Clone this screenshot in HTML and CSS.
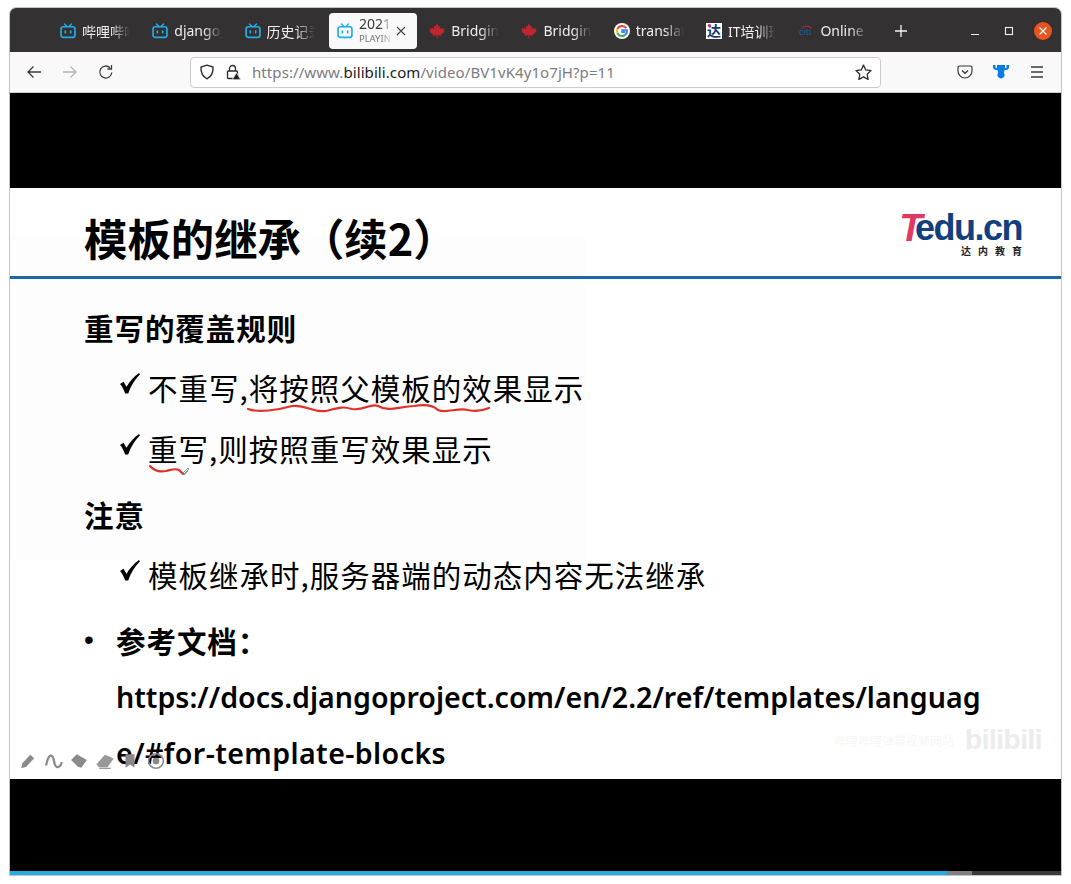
FILE: index.html
```html
<!DOCTYPE html>
<html lang="en">
<head>
    <meta charset="UTF-8">
    <meta name="viewport" content="width=device-width, initial-scale=1.0">
    <link rel="stylesheet" href="styles.css">
    <title>2021 django</title>
</head>
<body>
    <svg class="sprites" width="0" height="0">
        <symbol id="tv" viewBox="0 0 18 18">
            <path d="M5 1l3 3M13 1l-3 3" fill="none" stroke="#23ade5" stroke-width="1.6" stroke-linecap="round"/>
            <rect x="1.2" y="4.2" width="15.6" height="12" rx="2.5" fill="none" stroke="#23ade5" stroke-width="1.9"/>
            <path d="M6 9v2M12 9v2" stroke="#23ade5" stroke-width="1.9" stroke-linecap="round"/>
        </symbol>
        <symbol id="leaf" viewBox="0 0 16 16">
            <path d="M8 .5l1.7 3 1.5-.7-.5 3.600 2-2 .5 1.300 2.300-.4-.8 2.600 1 .6L12 11.500l.3 1.300-3.800-.5V15.500h-1v-3.200l-3.800.5.300-1.300L.300 8.500l1-.6-.8-2.600 2.300.4.500-1.300 2 2-.5-3.600 1.500.7z" fill="#c0262d"/>
        </symbol>
        <symbol id="tick" viewBox="0 0 20 21">
            <path d="M0 11l3.500-2.300 3 5.100C9.500 8.500 13.500 4 19 0l1 1.200C15 6 11 12.500 8.200 20.500H5.200C4 17 2.300 13.500 0 11z" fill="#000"/>
        </symbol>
    </svg>

    <div class="window">
        <div class="tabbar">
            <div class="tab"><svg class="favicon"><use href="#tv"/></svg><span class="tab-title">哔哩哔哩</span></div>
            <div class="tab"><svg class="favicon"><use href="#tv"/></svg><span class="tab-title">django_</span></div>
            <div class="tab"><svg class="favicon"><use href="#tv"/></svg><span class="tab-title">历史记录</span></div>
            <div class="tab tab-active">
                <svg class="favicon"><use href="#tv"/></svg>
                <div class="tab-stack">
                    <span class="tab-title">2021最新</span>
                    <span class="tab-sub">PLAYING</span>
                </div>
                <svg class="tab-close" width="10" height="10" viewBox="0 0 10 10"><path d="M1 1l8 8M9 1l-8 8" stroke="#444" stroke-width="1.1"/></svg>
            </div>
            <div class="tab"><svg class="favicon"><use href="#leaf"/></svg><span class="tab-title">Bridging</span></div>
            <div class="tab"><svg class="favicon"><use href="#leaf"/></svg><span class="tab-title">Bridging</span></div>
            <div class="tab">
                <svg class="favicon" viewBox="0 0 16 16">
                    <circle cx="8" cy="8" r="8" fill="#fff"/>
                    <path d="M12.300 5.300A5 5 0 0 0 3.500 5.800" fill="none" stroke="#e94235" stroke-width="2"/>
                    <path d="M3.500 5.800a5 5 0 0 0 0 4.400" fill="none" stroke="#fabb05" stroke-width="2"/>
                    <path d="M3.500 10.200a5 5 0 0 0 7.600 1.700" fill="none" stroke="#34a853" stroke-width="2"/>
                    <path d="M11.100 11.900A5 5 0 0 0 13 7.200H8.200v1.700H11" fill="none" stroke="#4285f4" stroke-width="2"/>
                </svg>
                <span class="tab-title">translate</span>
            </div>
            <div class="tab"><span class="favicon fav-it">达</span><span class="tab-title">IT培训班</span></div>
            <div class="tab">
                <svg class="favicon" viewBox="0 0 16 16">
                    <path d="M3.500 5.500C6 2.500 10 2.500 14 5" fill="none" stroke="#d8262c" stroke-width="1"/>
                    <text class="citi-text" x="1" y="12">citi</text>
                </svg>
                <span class="tab-title">Online B</span>
            </div>
            <svg class="newtab" width="14" height="14" viewBox="0 0 14 14"><path d="M7 1v12M1 7h12" stroke="#f4f4f4" stroke-width="1.300"/></svg>
            <div class="winbtns">
                <svg width="10" height="10" viewBox="0 0 10 10"><path d="M1 8.500h8" stroke="#eee" stroke-width="1.200"/></svg>
                <svg width="10" height="10" viewBox="0 0 10 10"><rect x="1.500" y="1.500" width="7" height="7" fill="none" stroke="#eee" stroke-width="1.100"/></svg>
                <span class="closebtn"><svg width="10" height="10" viewBox="0 0 10 10"><path d="M1.500 1.500l7 7M8.500 1.500l-7 7" stroke="#fff" stroke-width="1.200"/></svg></span>
            </div>
        </div>

        <div class="navbar">
            <svg class="navicon" viewBox="0 0 16 16"><path d="M15 8H2M7.500 2.500L2 8l5.500 5.500" fill="none" stroke="#3b3b3b" stroke-width="1.300"/></svg>
            <svg class="navicon" viewBox="0 0 16 16"><path d="M1 8h13M8.500 2.500L14 8l-5.500 5.500" fill="none" stroke="#b4b4b6" stroke-width="1.300"/></svg>
            <svg class="navicon" viewBox="0 0 16 16"><path d="M13.800 8.500A6 6 0 1 1 12 3.700M13.500 1v4h-4" fill="none" stroke="#3b3b3b" stroke-width="1.300"/></svg>
            <div class="urlbar">
                <svg class="urlicon" viewBox="0 0 16 16"><path d="M8 1.200L14 3c.300 5.500-1.500 9.500-6 11.800C3.500 12.500 1.700 8.500 2 3z" fill="none" stroke="#2b2b2b" stroke-width="1.400"/></svg>
                <svg class="urlicon" viewBox="0 0 16 16">
                    <path d="M4.500 7V4.500a3 3 0 0 1 6 0V7" fill="none" stroke="#2b2b2b" stroke-width="1.300"/>
                    <rect x="2.500" y="7" width="10" height="7.500" rx="1" fill="none" stroke="#2b2b2b" stroke-width="1.300"/>
                    <path d="M11.500 8.500l4.300 7.300H7.200z" fill="#222" stroke="#f9f9fa" stroke-width=".8"/>
                </svg>
                <span class="url"><span class="url-dim">https://www.</span>bilibili.com<span class="url-dim">/video/BV1vK4y1o7jH?p=11</span></span>
                <svg class="urlstar" viewBox="0 0 16 16"><path d="M8 1l2.100 4.600 5 .6-3.700 3.400 1 4.900L8 12.100l-4.400 2.400 1-4.900L.9 6.200l5-.6z" fill="none" stroke="#2b2b2b" stroke-width="1.200" stroke-linejoin="round"/></svg>
            </div>
            <div class="navright">
                <svg class="navicon" viewBox="0 0 16 16"><path d="M2.500 2h11A1.500 1.500 0 0 1 15 3.500V7a7 7 0 0 1-14 0V3.500A1.500 1.500 0 0 1 2.500 2z" fill="none" stroke="#3b3b3b" stroke-width="1.200"/><path d="M5 6.500L8 9.300l3-2.800" fill="none" stroke="#3b3b3b" stroke-width="1.300"/></svg>
                <svg class="navicon" viewBox="0 0 16 16"><path d="M0 1h2.500v3H4V1h8v3h1.500V1H16v3l-2 2h-2.500l-.5 3a3.500 3.500 0 1 1-6 0l-.5-3H2L0 4z" fill="#0a7ce6"/></svg>
                <svg class="navicon" viewBox="0 0 16 16"><path d="M2 3h12M2 8h12M2 13h12" stroke="#3b3b3b" stroke-width="1.300"/></svg>
            </div>
        </div>

        <div class="video">
            <div class="bar-top"></div>
            <div class="slide">
                <div class="slide-tint"></div>
                <header class="slide-head">
                    <h1>模板的继承（续2）</h1>
                    <div class="logo">
                        <div class="logo-mark"><span class="logo-t">T</span><span class="logo-edu">edu.cn</span></div>
                        <div class="logo-sub">达内教育</div>
                    </div>
                </header>
                <div class="slide-body">
                    <h2>重写的覆盖规则</h2>
                    <p class="check"><svg class="tick"><use href="#tick"/></svg>不重写,将按照父模板的效果显示</p>
                    <p class="check check-two"><svg class="tick"><use href="#tick"/></svg>重写,则按照重写效果显示</p>
                    <h2 class="note">注意</h2>
                    <p class="check check-last"><svg class="tick"><use href="#tick"/></svg>模板继承时,服务器端的动态内容无法继承</p>
                    <div class="refs">
                        <span class="dot">•</span>
                        <div>
                            <h2 class="refs-title">参考文档：</h2>
                            <p class="link">https://docs.djangoproject.com/en/2.2/ref/templates/languag<br><span class="link-end">e/#for-template-blocks</span></p>
                        </div>
                    </div>
                </div>

                <svg class="ink ink-one" width="244" height="16" viewBox="0 0 244 16"><path d="M1 9c10 4 30 1 44-3 14-2 20 7 34 5 12-3 16-5 26-2 12 2 18-6 26-3 10 6 20 1 36 0 12-2 20 0 24 4 8 4 20-3 30 0 8 2 14 1 21-2" fill="none" stroke="#e2302a" stroke-width="2.200" stroke-linecap="round"/></svg>
                <svg class="ink ink-two" width="42" height="16" viewBox="0 0 42 16"><path d="M1 3c4 5 10 6 16 5 5-1 9-3 13-1 2 2 3 3 4 4" fill="none" stroke="#e2302a" stroke-width="2.200" stroke-linecap="round"/><path d="M33 11l6-6 1 1-6 6zM35 12l4-4" fill="none" stroke="#777" stroke-width=".8"/></svg>

                <div class="pentools">
                    <svg viewBox="0 0 16 16"><path d="M2 14.500l1-4.500 7-7.500 3.500 3-7 7.500z" fill="#8a8a8a"/></svg>
                    <svg viewBox="0 0 16 16"><path d="M1 12C3 1 7 1 8 8s5 7 7 1" fill="none" stroke="#8a8a8a" stroke-width="2"/></svg>
                    <svg viewBox="0 0 16 16"><path d="M1 7l5-5 9 5-5 7-3-1z" fill="#8a8a8a"/></svg>
                    <svg viewBox="0 0 16 16"><path d="M1 11l7-8 7 3-5 7H3zM3 14.500h10" fill="#999" stroke="#999"/></svg>
                    <svg viewBox="0 0 16 16"><path d="M4 2h8v12l-4-3-4 3z" fill="#888"/></svg>
                    <svg viewBox="0 0 16 16"><circle cx="8" cy="8" r="6.500" fill="none" stroke="#8a8a8a" stroke-width="1.400"/><circle cx="8" cy="8" r="3" fill="#8a8a8a"/></svg>
                </div>
                <div class="watermark">
                    <span class="wm-cn">哔哩哔哩弹幕视频网站</span>
                    <span class="wm-logo">bilibili</span>
                </div>
            </div>
            <div class="bar-bottom"></div>
            <div class="progress"><div class="progress-played"></div><div class="progress-buffer"></div></div>
        </div>
    </div>
</body>
</html>
```

FILE: styles.css
```css
*{
    box-sizing: border-box;
}
html, body{
    margin: 0;
    height: 100%;
    background: #fff;
}
body{
    padding: 7px 9px 8px 9px;
    font-family: "Noto Sans", "Noto Sans CJK SC", sans-serif;
}
.sprites{
    position: absolute;
}
.window{
    width: 1053px;
    height: 869px;
    display: flex;
    flex-direction: column;
    border: 1px solid #c4c4c4;
    border-radius: 7px 7px 0 0;
    overflow: hidden;
}

/* tabs */
.tabbar{
    height: 44px;
    flex: none;
    display: flex;
    align-items: center;
    padding: 0 0 0 42px;
    background: #333131;
}
.tab{
    width: 92.3px;
    height: 36px;
    margin-top: 1px;
    flex: none;
    display: flex;
    align-items: center;
    gap: 6px;
    padding: 0 14px 0 8px;
    color: #eee;
    font-size: 14px;
}
.tab-active{
    width: 88px;
    margin-right: 4.300px;
    padding-right: 6px;
    background: #f9f9fa;
    border-radius: 4px;
    color: #3a3a3a;
}
.favicon{
    width: 16px;
    height: 16px;
    flex: none;
}
.tab-title{
    display: block;
    overflow: hidden;
    white-space: nowrap;
    flex: 1;
    -webkit-mask-image: linear-gradient(to right, #000 60%, transparent 100%);
    mask-image: linear-gradient(to right, #000 60%, transparent 100%);
}
.tab-stack{
    width: 34px;
    flex: none;
    display: flex;
    flex-direction: column;
    line-height: 13px;
    overflow: hidden;
}
.tab-stack .tab-title{
    flex: none;
    line-height: 16px;
}
.tab-sub{
    font-size: 9.5px;
    color: #777;
    overflow: hidden;
    white-space: nowrap;
    -webkit-mask-image: linear-gradient(to right, #000 65%, transparent 100%);
    mask-image: linear-gradient(to right, #000 65%, transparent 100%);
}
.tab-close{
    flex: none;
    margin-left: -3px;
}
.fav-it{
    position: relative;
    background: #fff;
    color: #15396e;
    font-size: 14px;
    line-height: 16px;
    font-weight: 700;
    text-align: center;
}
.fav-it::before{
    content: "";
    position: absolute;
    left: 2px;
    top: 1px;
    width: 3px;
    height: 3px;
    border-radius: 50%;
    background: #e5267d;
}
.citi-text{
    font-size: 9px;
    fill: #1d5fa8;
}
.newtab{
    margin: 2px 0 0 11px;
    flex: none;
}
.winbtns{
    margin-left: auto;
    display: flex;
    align-items: center;
    gap: 24px;
    padding-right: 9px;
    margin-top: 1px;
}
.closebtn{
    width: 18px;
    height: 18px;
    margin-left: -4px;
    border-radius: 50%;
    background: #e95420;
    display: flex;
    align-items: center;
    justify-content: center;
}

/* toolbar */
.navbar{
    height: 41px;
    flex: none;
    display: flex;
    align-items: center;
    padding: 0 0 0 16px;
    gap: 20px;
    background: #f9f9fa;
    border-bottom: 1px solid #ccc;
}
.navicon{
    width: 16px;
    height: 16px;
    flex: none;
}
.urlbar{
    width: 691px;
    height: 31px;
    flex: none;
    margin-left: 56px;
    display: flex;
    align-items: center;
    padding: 0 8px;
    background: #fff;
    border: 1px solid #ccc;
    border-radius: 4px;
}
.urlicon{
    width: 16px;
    height: 16px;
    flex: none;
    margin-right: 10px;
}
.url{
    flex: 1;
    margin-left: 1px;
    font-size: 15px;
    letter-spacing: .08px;
    white-space: nowrap;
    color: #1a1a1a;
}
.url-dim{
    color: #7b7b80;
}
.urlstar{
    width: 17px;
    height: 17px;
    flex: none;
}
.navright{
    display: flex;
    align-items: center;
    gap: 20px;
    margin-left: 56px;
}

/* video */
.video{
    flex: 1;
    display: flex;
    flex-direction: column;
    background: #000;
}
.bar-top{
    height: 95px;
    flex: none;
}
.bar-bottom{
    flex: 1;
}
.progress{
    height: 4px;
    flex: none;
    display: flex;
    background: #3a3a3a;
}
.progress-played{
    width: 937px;
    background: #23ade5;
}
.progress-buffer{
    width: 25px;
    background: #808080;
}

/* slide */
.slide{
    height: 591px;
    flex: none;
    position: relative;
    background: #fff;
    color: #000;
    overflow: hidden;
    font-family: "Noto Sans CJK SC", "Noto Sans", sans-serif;
}
.slide-tint{
    position: absolute;
    left: 0;
    top: 50px;
    width: 575px;
    height: 322px;
    background: #fdfdfd;
}
.slide-head{
    height: 91px;
    position: relative;
    display: flex;
    justify-content: space-between;
    padding: 0 39px 0 74px;
    border-bottom: 3px solid #1a69a6;
}
.slide-head h1{
    margin: 18px 0 0;
    font-size: 43.4px;
    line-height: 62px;
    font-weight: 700;
}
.logo{
    margin-top: 23px;
    text-align: right;
}
.logo-mark{
    display: flex;
    justify-content: flex-end;
    font-family: "Liberation Sans", sans-serif;
    font-weight: 700;
    font-size: 36px;
    line-height: 34px;
    letter-spacing: -1.5px;
}
.logo-t{
    margin-right: -6px;
    font-size: 38px;
    color: #df3a63;
    font-style: italic;
}
.logo-edu{
    position: relative;
    color: #123f7e;
}
.logo-sub{
    font-size: 10px;
    line-height: 12px;
    font-weight: 700;
    letter-spacing: 7px;
    margin-right: -7px;
    color: #222;
}
.slide-body{
    position: relative;
    padding: 26px 0 0 74px;
}
.slide-body h2{
    margin: 0;
    font-size: 29.5px;
    letter-spacing: .95px;
    line-height: 44px;
    font-weight: 700;
}
.check{
    margin: 16px 0 0 36px;
    font-size: 29.5px;
    letter-spacing: 1px;
    line-height: 44px;
    font-weight: 400;
    display: flex;
}
.check-two{
    margin-top: 17px;
}
.tick{
    width: 20px;
    height: 21px;
    margin: 8px 8px 0 0;
    flex: none;
}
.slide-body .note{
    margin-top: 22px;
}
.check-last{
    margin-top: 16px;
}
.refs{
    display: flex;
    margin-top: 22px;
}
.dot{
    width: 32px;
    flex: none;
    font-size: 28px;
    line-height: 44px;
    font-family: "Liberation Sans", sans-serif;
}
.link{
    margin: 7px 0 0;
    font-family: "Noto Sans", sans-serif;
    font-size: 28.6px;
    line-height: 56px;
    font-weight: 600;
    white-space: nowrap;
}
.link-end{
    letter-spacing: .4px;
}
.ink{
    position: absolute;
}
.ink-one{
    left: 237px;
    top: 212px;
}
.ink-two{
    left: 139px;
    top: 275px;
}
.pentools{
    position: absolute;
    left: 9px;
    top: 564px;
    display: flex;
    gap: 7.600px;
}
.pentools svg{
    width: 18px;
    height: 18px;
}
.watermark{
    position: absolute;
    right: 19px;
    top: 536px;
    display: flex;
    align-items: center;
    gap: 11px;
    color: #ececec;
}
.wm-cn{
    font-size: 12px;
    color: #f6f6f6;
}
.wm-logo{
    font-family: "Liberation Sans", sans-serif;
    font-size: 28px;
    font-weight: 700;
    letter-spacing: -.5px;
}
```
